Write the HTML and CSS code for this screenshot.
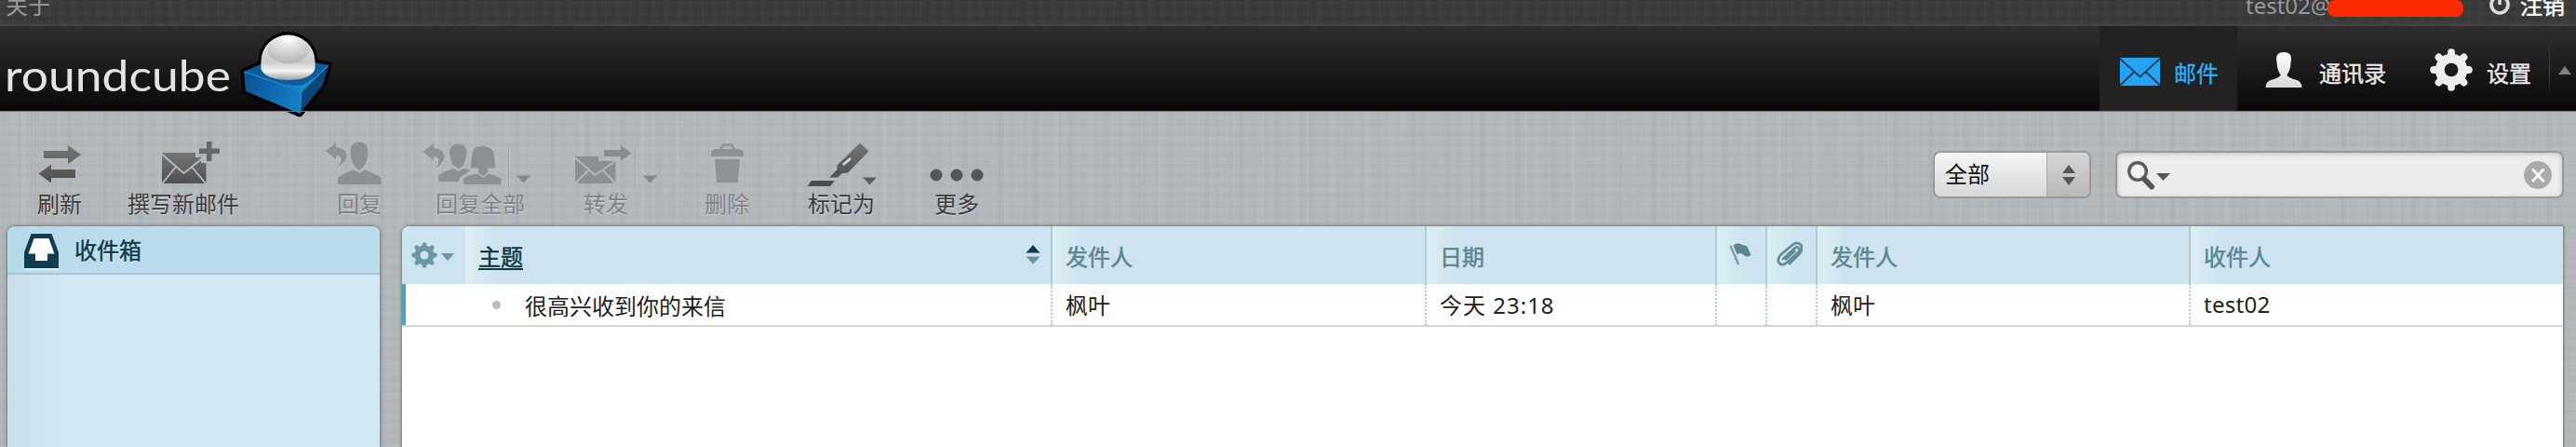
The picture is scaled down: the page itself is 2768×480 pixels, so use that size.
FILE: index.html
```
<!DOCTYPE html>
<html lang="zh-CN">
  <head>
    <meta charset="UTF-8" />
    <meta name="viewport" content="width=device-width, initial-scale=1.0" />
    <title>Roundcube Webmail</title>
    <link rel="stylesheet" href="styles.css">
  </head>
  <body>

    <!-- shared shapes -->
    <svg class="defs" width="0" height="0">
      <defs>
        <linearGradient id="dark" x1="0" y1="0" x2="0" y2="1">
          <stop offset="0" stop-color="#757575" />
          <stop offset="1" stop-color="#505050" />
        </linearGradient>
        <linearGradient id="light" x1="0" y1="0" x2="0" y2="1">
          <stop offset="0" stop-color="#ffffff" />
          <stop offset="1" stop-color="#d8d8d8" />
        </linearGradient>
        <linearGradient id="ball" x1="0" y1="0" x2="0" y2="1">
          <stop offset="0" stop-color="#f6f6f6" />
          <stop offset="0.35" stop-color="#dadada" />
          <stop offset="0.6" stop-color="#cccccc" />
          <stop offset="0.8" stop-color="#f4f4f4" />
          <stop offset="1" stop-color="#9c9c9c" />
        </linearGradient>
        <radialGradient id="shine" cx="0.5" cy="0.1" r="0.9">
          <stop offset="0" stop-color="#ffffff" />
          <stop offset="0.5" stop-color="#d6d6d6" />
          <stop offset="1" stop-color="#b4b4b4" />
        </radialGradient>
        <linearGradient id="front" x1="0" y1="0" x2="1" y2="0.4">
          <stop offset="0" stop-color="#0a4f92" />
          <stop offset="1" stop-color="#147cc4" />
        </linearGradient>
        <symbol id="gear" viewBox="-22 -22 44 44">
          <g fill="none" stroke="currentColor">
            <circle r="11.8" stroke-width="9.5" />
            <path stroke-width="7.5" stroke-linecap="round" d="M0-15V-18M0 15V18M-15 0H-18M15 0H18M-10.6-10.6L-12.9-12.9M10.6-10.6L12.9-12.9M-10.6 10.6L-12.9 12.9M10.6 10.6L12.9 12.9" />
          </g>
        </symbol>
      </defs>
    </svg>

    <div class="topline">
      <a class="about">关于</a>
      <span class="username">test02@</span>
      <span class="redacted"></span>
      <svg class="power" width="26" height="26" viewBox="-13 -13 26 26">
        <path d="M-5-7.5A9 9 0 1 0 5-7.5" fill="none" stroke="#dcdcdc" stroke-width="3.6" stroke-linecap="round" />
        <path d="M0-12V0" stroke="#dcdcdc" stroke-width="3.4" />
      </svg>
      <a class="logout">注销</a>
    </div>

    <div class="header">
      <svg class="logo" width="370" height="104" viewBox="0 28 370 104">
        <text class="wordmark" x="5" y="98" textLength="243" lengthAdjust="spacingAndGlyphs">roundcube</text>
        <g stroke-linejoin="round">
          <path d="M262 77L300 60L353 70L347 91L322 122L264 98Z" fill="#000" stroke="#000" stroke-width="7" />
          <ellipse cx="309.500" cy="66" rx="32" ry="32" fill="#000" />
          <path d="M262 77L300 60L353 70L324 98Z" fill="#0c5c9c" />
          <path d="M262 77L324 98L322 122L264 98Z" fill="url(#front)" />
          <path d="M324 98L353 70L347 91L322 122Z" fill="#0b4579" />
          <path d="M284 84Q300 92 324 92L340 82L324 97Z" fill="#1689cf" />
          <path d="M262 77L324 98L353 70M324 98L322 122" fill="none" stroke="#2b8fd0" stroke-width="1.2" />
        </g>
        <path d="M280.500 66A29 28.500 0 0 1 338.500 66V74C336 82 325 86 310 86S283 82 280.500 74Z" fill="url(#ball)" />
        <ellipse cx="310" cy="53.500" rx="22.500" ry="14.500" fill="url(#shine)" />
      </svg>

      <div class="nav">
        <a class="nav-item selected">
          <svg width="43" height="30" viewBox="0 0 43 30">
            <rect width="43" height="30" fill="#24a4f6" />
            <path d="M0 1L21.500 20.500L43 1M0 29.500L15.500 15M43 29.500L27.500 15" fill="none" stroke="#1d4058" stroke-width="2" />
          </svg>
          <span>邮件</span>
        </a>
        <a class="nav-item contacts">
          <svg width="40" height="40" viewBox="0 0 40 40">
            <path d="M12 8Q12 1 20 1T28 8L27 17Q25.500 23 23.500 25V26Q26 29 34 31Q39.500 33 39.500 39H.5Q.5 33 6 31Q14 29 16.500 26V25Q14.500 23 13 17Z" fill="url(#light)" />
          </svg>
          <span>通讯录</span>
        </a>
        <a class="nav-item settings">
          <svg class="settings-gear" width="46" height="46"><use href="#gear" /></svg>
          <span>设置</span>
        </a>
        <span class="nav-toggle"><i class="arrow-up"></i></span>
      </div>
    </div>

    <div class="toolbar">
      <div class="button refresh">
        <svg width="80" height="60" viewBox="24 144 80 60">
          <path d="M47 161H73V155L87 165L73 175V169H47ZM81 181H55V175.500L41.500 185.500L55 195.500V190H81Z" fill="url(#dark)" />
        </svg>
        <span>刷新</span>
      </div>
      <div class="button compose">
        <svg width="138" height="60" viewBox="128 144 138 60">
          <path d="M174 163H210V168H216V174H221.500V196H174Z" fill="url(#dark)" />
          <path d="M174 164.500L197.500 185L220 167M174.500 196L189 178M221 196L206 178" fill="none" stroke="#b6bbbe" stroke-width="1.8" />
          <path d="M222 151H227.500V158.500H236V164H227.500V172H222V164H214V158.500H222Z" fill="#666" />
        </svg>
        <span>撰写新邮件</span>
      </div>
      <div class="button reply disabled">
        <svg width="90" height="60" viewBox="341 144 90 60">
          <path d="M350 161L361 152V157Q372 158 372.500 166Q372.500 172 363 178Q367.500 172 366.500 169Q365.500 166 361 166V170Z" fill="#8f9295" />
          <path d="M376.500 161Q377 151.500 386 151.500T395.500 161L394.500 170Q393 175 390.500 178L386 182L381.500 178Q379 175 377.500 170ZM363 197V190Q368 186 380 181L386 185L392 181Q404 186 409.500 190V197Z" fill="#8d9093" />
        </svg>
        <span>回复</span>
      </div>
      <div class="button reply-all disabled">
        <svg width="132" height="60" viewBox="450 144 132 60">
          <path d="M454.500 162L466 153V158Q477 159 477.500 167Q477.500 173 468 180Q472 174 471 170Q470 167 466 167V171Z" fill="#8f9295" />
          <path d="M483 162Q484 153.500 492.500 153.500T501.500 162L500 171Q499 175 497 177L493 180.500L488 177Q485.500 175 484.500 171ZM471.500 194V187Q477 183 487 180L493 183L498 179.500L505.500 182Q500 186 496 188Q493 190 493 194Z" fill="#8d9093" />
          <path d="M505.500 179.500L507.500 163Q509 156 518.500 156T530.500 164L532.500 179.500H524V184L519 188.500L514 184V179.500ZM498 197V191Q503 187 513 185.500L519 190L525 185.500Q534 188 538.500 191V197Z" fill="#8d9093" />
          <path d="M546.500 158V200" stroke="#999da0" /><path d="M547.500 158V200" stroke="#c4c9cb" />
          <path d="M555 187.500H570L562.500 195.500Z" fill="#84878a" />
        </svg>
        <span>回复全部</span>
      </div>
      <div class="button forward disabled">
        <svg width="116" height="60" viewBox="593 144 116 60">
          <path d="M618 167H643V172H661.500V196H618Z" fill="#8d9093" />
          <path d="M618 168.500L639.500 187L661 172M618 196L633 181M661.500 196L647 181" fill="none" stroke="#b3b8bb" stroke-width="1.800" />
          <path d="M649 160H667V155L678.500 163.500L667 172V167H649Z" fill="#8a8d90" />
          <path d="M683 158V201" stroke="#999da0" /><path d="M684 158V201" stroke="#c4c9cb" />
          <path d="M691 187.500H706L698.500 195.500Z" fill="#84878a" />
        </svg>
        <span>转发</span>
      </div>
      <div class="button delete disabled">
        <svg width="60" height="60" viewBox="751 144 60 60">
          <path d="M774 160L777 154.500H786L789 160" fill="none" stroke="#8f9295" stroke-width="2.500" />
          <path d="M764 167V163Q765 159 770 159H793Q798 159 799 163V167ZM768 170H795L793 195H770Z" fill="#8f9295" />
        </svg>
        <span>删除</span>
      </div>
      <div class="button mark">
        <svg width="80" height="60" viewBox="864 144 80 60">
          <path d="M924 152.500L933.500 161.500L911 184.500L905 185L900 189.500H891.500L899.500 181V176.500Z" fill="url(#dark)" />
          <path d="M906 176L914 169" stroke="#d8dada" stroke-width="2.500" />
          <path d="M872 193H897L892 199H867.500Z" fill="#4d4d4d" />
          <path d="M927 189.500H942L934.500 197.500Z" fill="#5c5c5c" />
        </svg>
        <span>标记为</span>
      </div>
      <div class="button more">
        <svg width="60" height="60" viewBox="998 144 60 60">
          <g fill="#565656"><circle cx="1006" cy="187" r="6.500" /><circle cx="1028" cy="187" r="6.500" /><circle cx="1050" cy="187" r="6.500" /></g>
        </svg>
        <span>更多</span>
      </div>

      <div class="filter">
        <span class="filter-value">全部</span>
        <span class="filter-handle">
          <svg width="16" height="24" viewBox="0 0 16 24"><path d="M8 1L15 10H1ZM1 14H15L8 23Z" fill="#555" /></svg>
        </span>
      </div>
      <div class="search">
        <svg width="48" height="32" viewBox="0 0 48 32">
          <circle cx="11" cy="12" r="9.300" fill="#f6f6f6" stroke="#5c5c5c" stroke-width="3.400" />
          <path d="M18 20L26 28.500" stroke="#555" stroke-width="6" stroke-linecap="round" />
          <path d="M31 14H46L38.500 22Z" fill="#555" />
        </svg>
        <svg width="30" height="30" viewBox="0 0 30 30">
          <circle cx="15" cy="15" r="15" fill="#aaa" />
          <path d="M9 8.500L21.500 22M21.500 8.500L9 22" stroke="#fff" stroke-width="2.800" />
        </svg>
      </div>
    </div>

    <div class="content">
      <div class="folders">
        <div class="folder">
          <svg width="37" height="39" viewBox="0 0 37 39">
            <path d="M7.500 0H29.500L37 20V37H0V20Z" fill="#103e50" />
            <path d="M10.500 5H26.500L32.500 21.500H25V29H12V21.500H4.500Z" fill="#fff" />
            <path d="M0 38H37" stroke="#eef7fa" stroke-width="1.500" />
          </svg>
          <span>收件箱</span>
        </div>
      </div>

      <div class="messages">
        <div class="row head">
          <div class="cell options">
            <svg class="list-gear" width="28" height="28"><use href="#gear" /></svg>
            <i class="arrow-down"></i>
          </div>
          <div class="cell sorted">
            <span>主题</span>
            <svg width="16" height="22" viewBox="0 0 16 22"><path d="M8 0L15.500 8.500H.5Z" fill="#10394a" /><path d="M.5 12.500H15.500L8 20.500Z" fill="#6693a1" /></svg>
          </div>
          <div class="cell">发件人</div>
          <div class="cell">日期</div>
          <div class="cell icon-cell">
            <svg width="24" height="26" viewBox="0 0 24 26">
              <path d="M1.500 4L10 24" stroke="#7d9da8" stroke-width="2.500" />
              <path d="M4.500 4Q7 0 12 2T19 4L23.500 14Q19 17 15 13.500T9 14Z" fill="#5b8591" />
            </svg>
          </div>
          <div class="cell icon-cell">
            <svg width="28" height="28" viewBox="0 0 28 28">
              <path d="M7 19L19 8Q22 5 24 7.500T22 13L11 23Q6 27 3 23.500T4 15L17 4Q22 0 25.500 3.500T25 13L14 24" fill="none" stroke="#628c98" stroke-width="2.800" stroke-linecap="round" />
              <path d="M9 20L20 10" stroke="#628c98" stroke-width="3" />
            </svg>
          </div>
          <div class="cell">发件人</div>
          <div class="cell">收件人</div>
        </div>
        <div class="row message">
          <div class="cell"></div>
          <div class="cell subject"><i class="dot"></i>很高兴收到你的来信</div>
          <div class="cell">枫叶</div>
          <div class="cell date">今天 23:18</div>
          <div class="cell"></div>
          <div class="cell"></div>
          <div class="cell">枫叶</div>
          <div class="cell recipient">test02</div>
        </div>
      </div>
    </div>

  </body>
</html>
```
FILE: styles.css
```
*{
  margin: 0;
  padding: 0;
  box-sizing: border-box;
}

body{
  height: 480px;
  overflow: hidden;
  display: flex;
  flex-direction: column;
  font-family: "Noto Sans", "Noto Sans CJK SC", sans-serif;
  font-size: 24px;
  color: #222;
  /* linen */
  background:
    repeating-linear-gradient(90deg, rgba(255,255,255,0.04) 0 2px, transparent 2px 7px, rgba(0,0,0,0.015) 7px 9px, transparent 9px 13px),
    repeating-linear-gradient(0deg, rgba(255,255,255,0.04) 0 2px, transparent 2px 5px, rgba(0,0,0,0.015) 5px 7px, transparent 7px 11px),
    repeating-linear-gradient(90deg, rgba(0,0,0,0.015) 0 5px, transparent 5px 23px, rgba(255,255,255,0.04) 23px 27px, transparent 27px 37px),
    #b1b7ba;
}

svg{
  display: block;
  flex: none;
}

.defs{
  position: absolute;
}

/* top line */
.topline{
  height: 28px;
  flex: none;
  display: flex;
  padding: 0 12px 0 6px;
  color: #999;
  border-bottom: 2px solid #424242;
  background:
    repeating-linear-gradient(90deg, rgba(255,255,255,0.02) 0 2px, transparent 2px 7px, rgba(0,0,0,0.06) 7px 9px, transparent 9px 13px),
    repeating-linear-gradient(0deg, rgba(255,255,255,0.02) 0 2px, transparent 2px 5px, rgba(0,0,0,0.06) 5px 7px, transparent 7px 11px),
    #3b3b3b;
}

.about, .username, .logout{
  line-height: 34px;
  margin-top: -11px;
  white-space: nowrap;
}

.username{
  margin-left: auto;
  width: 88px;
}

.redacted{
  width: 146px;
  height: 18px;
  border-radius: 8px;
  background: #ff2a00;
}

.power{
  margin: -8px 9px 0 26px;
}

.logout{
  color: #fff;
  -webkit-text-stroke: 0.5px;
}

/* header */
.header{
  height: 91px;
  flex: none;
  display: flex;
  justify-content: space-between;
  background: linear-gradient(#2e2e2e, #1b1b1b 50%, #080808);
}

.wordmark{
  font-family: Lato, sans-serif;
  font-size: 47px;
  fill: #e4e4e4;
}

.nav{
  display: flex;
  height: 91px;
  color: #e8e8e8;
}

.nav-item{
  display: flex;
  align-items: center;
  padding-top: 2px;
  text-shadow: 0 1px 2px #000;
  -webkit-text-stroke: 0.5px;
}

.selected{
  width: 148px;
  padding-left: 22px;
  gap: 15px;
  background: #222;
  color: #2bb1f8;
}

.selected svg{
  margin-top: 5px;
}

.nav-item span{
  line-height: 34px;
  margin-top: 9px;
}

.contacts{
  padding-left: 30px;
  gap: 18px;
}

.settings{
  padding-left: 47px;
  gap: 15px;
}

.settings-gear{
  color: #ededed;
}

.nav-toggle{
  width: 29px;
  margin-left: 19px;
  padding: 43px 0 0 10px;
  background: linear-gradient(transparent 15%, #444 50%, transparent 85%) no-repeat left / 1px 100%;
}

.arrow-up{
  display: block;
  width: 14px;
  border: 7px solid transparent;
  border-top: 0;
  border-bottom: 9px solid #808080;
}

/* toolbar */
.toolbar{
  height: 124px;
  flex: none;
  display: flex;
  padding: 25px 13px 0 24px;
  border-top: 1px solid #777;
}

.button{
  display: flex;
  flex-direction: column;
  align-items: center;
  flex: none;
  color: #3c3c3c;
  text-shadow: 0 1px 1px rgba(255,255,255,0.5);
}

.button span{
  line-height: 28px;
  white-space: nowrap;
}

.disabled span{
  color: #7f8285;
}

.compose{ margin-left: 24px; }
.reply{ margin-left: 75px; }
.reply-all{ margin-left: 19px; }
.forward{ margin-left: 11px; }
.delete{ margin-left: 42px; }
.mark{ margin-left: 53px; }
.more{ margin-left: 54px; }

.filter{
  width: 170px;
  height: 51px;
  margin: 17px 0 0 auto;
  display: flex;
  border: 2px solid #999;
  border-radius: 8px;
  background: linear-gradient(#f5f5f5, #d8d8d8);
  color: #111;
}

.filter-value{
  flex: 1;
  padding-left: 11px;
  line-height: 46px;
}

.filter-handle{
  width: 46px;
  display: flex;
  align-items: center;
  justify-content: center;
  border-left: 1px solid #aaa;
  border-radius: 0 6px 6px 0;
  background: linear-gradient(#d5d5d5, #b9b9b9);
}

.search{
  width: 482px;
  height: 51px;
  margin: 17px 0 0 26px;
  padding: 0 11px;
  display: flex;
  align-items: center;
  justify-content: space-between;
  border: 2px solid #999;
  border-radius: 8px;
  background: #ececec;
  box-shadow: inset 0 1px 5px rgba(0,0,0,0.2);
}

/* content */
.content{
  flex: 1;
  display: flex;
  gap: 24px;
  padding: 0 14px 0 8px;
}

.folders, .messages{
  overflow: hidden;
  border-radius: 8px 8px 0 0;
  box-shadow: 0 0 3px 1px #777;
}

.folders{
  width: 400px;
  background: linear-gradient(90deg, #c8e0ea, #d1e7f1 14%);
}

.folder{
  height: 52px;
  display: flex;
  align-items: center;
  gap: 18px;
  padding: 4px 18px 0;
  border-bottom: 2px solid #a8c6d0;
  background: linear-gradient(90deg, #b4d9e7, #badcec 14%);
  color: #10394a;
  text-shadow: 0 1px 1px #fff;
  -webkit-text-stroke: 0.5px;
}

.folder span{
  line-height: 34px;
  margin: -2px 0 0 -1px;
}

.messages{
  flex: 1;
  border-top-right-radius: 0;
  background: #fff;
}

.row{
  display: grid;
  grid-template-columns: 68px 629px 402px 312px 54px 54px 401px 1fr;
}

.cell{
  display: flex;
  align-items: center;
  padding-left: 14px;
  border-left: 2px solid transparent;
}

.head{
  height: 62px;
  color: #5b8591;
  background: #cde4f0;
  -webkit-text-stroke: 0.5px;
}

.head .cell{
  border-left-color: #afcbd3;
  background: linear-gradient(90deg, #dceef2, #cde4f0 30px);
}

.head .options{
  padding-left: 10px;
  gap: 4px;
  border-left: 0;
  background: #cce3f0;
}

.list-gear{
  color: #6c97a4;
}

.arrow-down{
  width: 14px;
  margin-top: 4px;
  border: 7px solid transparent;
  border-bottom: 0;
  border-top: 8px solid #6c97a4;
}

.head .sorted{
  justify-content: space-between;
  padding-right: 11px;
  border-left-color: #dceef2;
  padding-left: 12px;
  color: #10394a;
}

.sorted span{
  text-decoration: underline;
  text-decoration-thickness: 2px;
  text-underline-offset: 3px;
}

.message{
  height: 46px;
  border-bottom: 2px solid #d5d5d5;
}

.message .cell{
  border-left: 2px dotted #b2d0da;
  padding-bottom: 2px;
}

.message .cell:first-child{
  border-left: 4px solid #49a3c7;
}

.message .subject{
  border-left: 0;
  padding: 0 0 0 29px;
}

.message .date{
  letter-spacing: 1px;
}

.recipient{
  letter-spacing: 0.3px;
}

.dot{
  width: 9px;
  height: 9px;
  margin-right: 26px;
  border-radius: 50%;
  background: #bbb;
}

.head .icon-cell{
  padding-left: 13px;
  padding-bottom: 2px;
}

.head .icon-cell + .icon-cell{
  padding-left: 10px;
}
```
